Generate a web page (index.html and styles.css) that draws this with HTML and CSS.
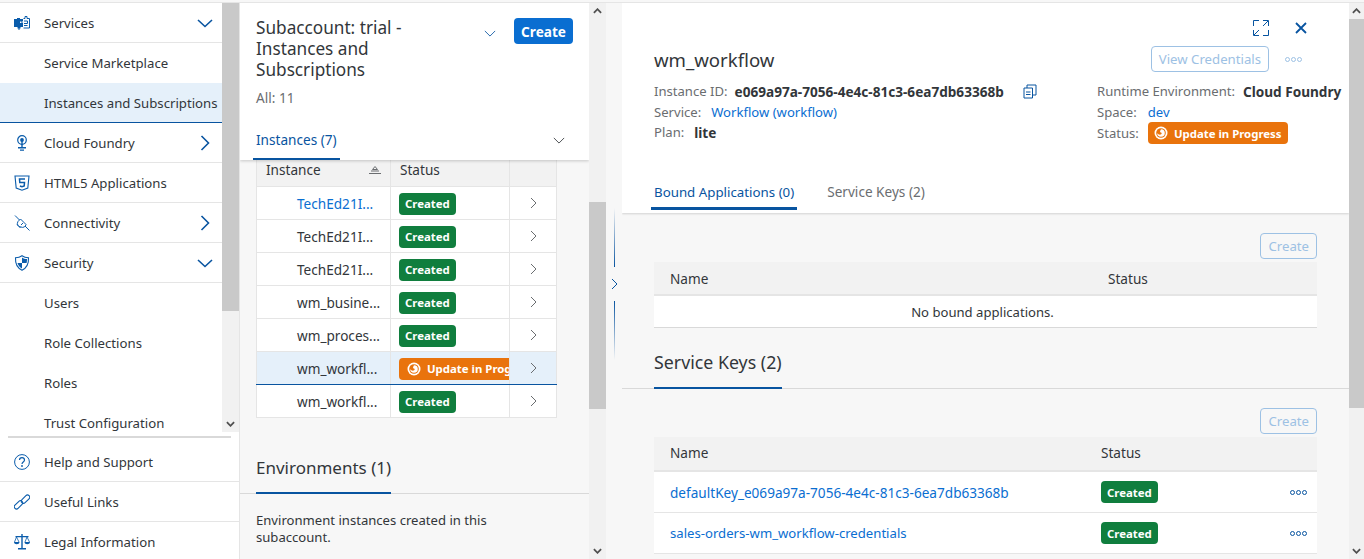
FILE: index.html
```html
<!DOCTYPE html>
<html lang="en">

<head>
	<meta charset="UTF-8">
	<meta name="viewport" content="width=device-width, initial-scale=1.0">
	<title>Instances and Subscriptions</title>
	<link rel="stylesheet" href="styles.css">
</head>

<body>
	<div class="app">
		<!-- Left navigation -->
		<aside class="nav">
			<div class="nav-top">
				<ul class="nav-list">
					<li class="nav-item">
						<svg class="nav-icon" viewBox="0 0 16 16"><path fill="#0a5cab" fill-rule="evenodd" d="M0 4h3V3h3v1h3v2.500h-1v1h1V12H6.500v1.500h-1V15h-1v-1.500h-1V12H0zM6 6.500v1.500h1.500V6.500z"/><path fill="none" stroke="#0a5cab" stroke-width="1" d="M9.500 3.500h1.500V1.500h2v2h2.500v9.500H9.500M10 6h3.500v2.500H10M13.500 6v0M10 10.500h3.500"/></svg>
						<span class="nav-text">Services</span>
						<svg class="nav-arrow" viewBox="0 0 16 16"><path d="M1 5l7 6.500L15 5"/></svg>
					</li>
					<li class="nav-item sub">Service Marketplace</li>
					<li class="nav-item sub selected">Instances and Subscriptions</li>
					<li class="nav-item">
						<svg class="nav-icon" viewBox="0 0 16 16"><circle cx="8" cy="5" r="4.300" fill="none" stroke="#0a5cab" stroke-width="1.200"/><circle cx="8" cy="5" r="1.900" fill="#0a5cab"/><path fill="#0a5cab" d="M7.300 6h1.400v7.500H7.300zM4 12h8v1.500H4zM6 14.500h4v1.300H6z"/></svg>
						<span class="nav-text">Cloud Foundry</span>
						<svg class="nav-arrow" viewBox="0 0 16 16"><path d="M4.500 1l7 7-7 7"/></svg>
					</li>
					<li class="nav-item">
						<svg class="nav-icon" viewBox="0 0 16 16"><path fill="none" stroke="#0a5cab" stroke-width="1.100" d="M1 1h14l-1.200 12L8 15.200 2.200 13z"/><path fill="none" stroke="#0a5cab" stroke-width="1.500" d="M11 4H5.500l.3 3.500h4.700L10.200 11 8 11.700 5.900 11"/></svg>
						<span class="nav-text">HTML5 Applications</span>
					</li>
					<li class="nav-item">
						<svg class="nav-icon" viewBox="0 0 16 16"><g fill="none" stroke="#0a5cab" stroke-width="1"><path d="M1 .500l4.500 4.500M11 11l4.500 4.500M4 6.500L6.500 4l5.500 5.500a3.500 3.500 0 0 1-5 2.500a3.500 3.500 0 0 1-3-5.500z"/><path d="M3 9.500L6.500 13M9 8l-2 2"/></g></svg>
						<span class="nav-text">Connectivity</span>
						<svg class="nav-arrow" viewBox="0 0 16 16"><path d="M4.500 1l7 7-7 7"/></svg>
					</li>
					<li class="nav-item">
						<svg class="nav-icon" viewBox="0 0 16 16"><path fill="none" stroke="#0a5cab" stroke-width="1.100" d="M8 .7c2 1.500 4 2 6.500 2 .3 5.500-1.500 10-6.500 12.500-5-2.500-6.800-7-6.500-12.500 2.500 0 4.500-.5 6.500-2z"/><path fill="#0a5cab" d="M8 2.500c1.500 1 3 1.500 5 1.600 0 1.300-.1 2.700-.4 3.900H8zM8 8v5.500C5.800 12.200 4.300 10.400 3.500 8z"/></svg>
						<span class="nav-text">Security</span>
						<svg class="nav-arrow" viewBox="0 0 16 16"><path d="M1 5l7 6.500L15 5"/></svg>
					</li>
					<li class="nav-item sub">Users</li>
					<li class="nav-item sub">Role Collections</li>
					<li class="nav-item sub">Roles</li>
					<li class="nav-item sub">Trust Configuration</li>
				</ul>
				<div class="scrollbar nav-scroll">
					<div class="thumb nav-thumb"></div>
					<div class="track-fill"></div>
					<svg class="scroll-arrow" viewBox="0 0 10 6"><path d="M1 1l4 4 4-4"/></svg>
				</div>
			</div>
			<ul class="nav-bottom">
				<li class="nav-item">
					<svg class="nav-icon" viewBox="0 0 16 16"><circle cx="8" cy="8" r="7.400" fill="none" stroke="#0a5cab" stroke-width="1"/><path fill="none" stroke="#0a5cab" stroke-width="1.200" d="M5.500 6c0-3.300 5-3.300 5 0 0 2-2.500 2-2.500 4"/><circle cx="8" cy="12" r=".9" fill="#0a5cab"/></svg>
					<span class="nav-text">Help and Support</span>
				</li>
				<li class="nav-item">
					<svg class="nav-icon" viewBox="0 0 16 16"><g fill="none" stroke="#0a5cab" stroke-width="1.100"><rect x="6.500" y="3" width="10" height="4.400" rx="2.200" transform="rotate(-45 11.500 5.200)"/><rect x="-.5" y="8.600" width="10" height="4.400" rx="2.200" transform="rotate(-45 4.500 10.800)"/></g></svg>
					<span class="nav-text">Useful Links</span>
				</li>
				<li class="nav-item">
					<svg class="nav-icon" viewBox="0 0 16 16"><path fill="#0a5cab" d="M7.300 0h1.400v14H7.300zM1.500 2h13v1.200h-13zM4 14h8v1.500H4z"/><path fill="#0a5cab" d="M0 8h5.500c0 3-5.500 3-5.500 0zM10.500 8H16c0 3-5.500 3-5.500 0z"/><path fill="none" stroke="#0a5cab" stroke-width=".8" d="M.5 8l2-5 2.500 5M11 8l2-5 2.500 5"/></svg>
					<span class="nav-text">Legal Information</span>
				</li>
			</ul>
		</aside>

		<!-- Instances list -->
		<section class="list-col">
			<div class="list-pane">
				<header class="list-head">
					<div class="list-title-row">
						<h1 class="list-title">Subaccount: trial - Instances and Subscriptions</h1>
						<svg class="title-chevron" viewBox="0 0 14 8"><path d="M1 1l6 6 6-6"/></svg>
						<button class="btn-primary">Create</button>
					</div>
					<div class="list-count">All: 11</div>
					<div class="list-tabs">
						<span class="list-tab">Instances (7)</span>
						<svg class="tab-chevron" viewBox="0 0 14 8"><path d="M1 1l6 6 6-6"/></svg>
					</div>
				</header>
				<table class="inst-table">
					<thead>
						<tr>
							<th class="c-name">
								<div class="th-sort">Instance
									<svg class="sort-icon" viewBox="0 0 12 8"><path d="M6 .500l2.500 3h-5zM2 5h8M0 7.500h12"/></svg>
								</div>
							</th>
							<th class="c-status">Status</th>
							<th class="c-go"></th>
						</tr>
					</thead>
					<tbody>
						<tr>
							<td class="c-name link">TechEd21I...</td>
							<td class="c-status"><span class="tag ok">Created</span></td>
							<td class="c-go"><svg class="row-go" viewBox="0 0 7 12"><path d="M1 1l5 5-5 5"/></svg></td>
						</tr>
						<tr>
							<td class="c-name">TechEd21I...</td>
							<td class="c-status"><span class="tag ok">Created</span></td>
							<td class="c-go"><svg class="row-go" viewBox="0 0 7 12"><path d="M1 1l5 5-5 5"/></svg></td>
						</tr>
						<tr>
							<td class="c-name">TechEd21I...</td>
							<td class="c-status"><span class="tag ok">Created</span></td>
							<td class="c-go"><svg class="row-go" viewBox="0 0 7 12"><path d="M1 1l5 5-5 5"/></svg></td>
						</tr>
						<tr>
							<td class="c-name">wm_busine...</td>
							<td class="c-status"><span class="tag ok">Created</span></td>
							<td class="c-go"><svg class="row-go" viewBox="0 0 7 12"><path d="M1 1l5 5-5 5"/></svg></td>
						</tr>
						<tr>
							<td class="c-name">wm_proces...</td>
							<td class="c-status"><span class="tag ok">Created</span></td>
							<td class="c-go"><svg class="row-go" viewBox="0 0 7 12"><path d="M1 1l5 5-5 5"/></svg></td>
						</tr>
						<tr class="row-selected">
							<td class="c-name">wm_workfl...</td>
							<td class="c-status">
								<div class="clip"><span class="tag busy">
									<svg class="tag-icon" viewBox="0 0 14 14"><circle cx="7" cy="7" r="6.500" fill="#fff"/><circle cx="7" cy="7" r="4.800" fill="#e9730c"/><path fill="#fff" d="M7 3.200a3.800 3.800 0 1 1-3.800 3.800c1 1.800 3 2 4 1.200S7.500 6 6 6.200c0-1 .3-2.200 1-3z"/></svg>
									Update in Progress</span></div>
							</td>
							<td class="c-go"><svg class="row-go" viewBox="0 0 7 12"><path d="M1 1l5 5-5 5"/></svg></td>
						</tr>
						<tr>
							<td class="c-name">wm_workfl...</td>
							<td class="c-status"><span class="tag ok">Created</span></td>
							<td class="c-go"><svg class="row-go" viewBox="0 0 7 12"><path d="M1 1l5 5-5 5"/></svg></td>
						</tr>
					</tbody>
				</table>
				<h2 class="env-title"><span>Environments (1)</span></h2>
				<p class="env-text">Environment instances created in this subaccount.</p>
			</div>
			<div class="scrollbar list-scroll">
				<svg class="scroll-arrow" viewBox="0 0 10 6"><path d="M1 5l4-4 4 4"/></svg>
				<div class="list-spacer"></div>
				<div class="thumb list-thumb"></div>
				<div class="track-fill"></div>
				<svg class="scroll-arrow" viewBox="0 0 10 6"><path d="M1 1l4 4 4-4"/></svg>
			</div>
		</section>

		<!-- Splitter -->
		<div class="splitter">
			<div class="split-line top"></div>
			<svg class="split-arrow" viewBox="0 0 7 12"><path d="M1 1l5 5-5 5"/></svg>
			<div class="split-line bottom"></div>
		</div>

		<!-- Detail panel -->
		<section class="detail">
			<div class="detail-pane">
				<header class="detail-head">
					<div class="detail-actions">
						<svg class="act-icon" viewBox="0 0 16 16"><path d="M6 .500H.5V6M10 15.500h5.500V10M.5 10v5.500H6M15.500 6V.500H10M15 1L10 6M1 15l5-5"/></svg>
						<svg class="act-icon close" viewBox="0 0 12 12"><path d="M1 1l10 10M11 1L1 11"/></svg>
					</div>
					<div class="detail-title-row">
						<h2 class="detail-title">wm_workflow</h2>
						<button class="btn-ghost">View Credentials</button>
						<span class="dots pale"><i></i><i></i><i></i></span>
					</div>
					<div class="facts">
						<div class="facts-col">
							<div class="fact"><span class="fact-label">Instance ID:</span><b>e069a97a-7056-4e4c-81c3-6ea7db63368b</b>
								<svg class="copy-icon" viewBox="0 0 14 15"><path d="M1 4h8.500v10H1zM4 4V1h9v10h-3.500M3 8h4.500M3 10.500h4.500"/></svg>
							</div>
							<div class="fact"><span class="fact-label">Service:</span><a class="link">Workflow (workflow)</a></div>
							<div class="fact"><span class="fact-label">Plan:</span><b class="plan-value">lite</b></div>
						</div>
						<div class="facts-col right">
							<div class="fact"><span class="fact-label">Runtime Environment:</span><b>Cloud Foundry</b></div>
							<div class="fact"><span class="fact-label">Space:</span><a class="link">dev</a></div>
							<div class="fact"><span class="fact-label">Status:</span><span class="tag busy status-tag">
								<svg class="tag-icon" viewBox="0 0 14 14"><circle cx="7" cy="7" r="6.500" fill="#fff"/><circle cx="7" cy="7" r="4.800" fill="#e9730c"/><path fill="#fff" d="M7 3.200a3.800 3.800 0 1 1-3.800 3.800c1 1.800 3 2 4 1.200S7.500 6 6 6.200c0-1 .3-2.200 1-3z"/></svg>
								Update in Progress</span></div>
						</div>
					</div>
					<nav class="detail-tabs">
						<span class="detail-tab active">Bound Applications (0)</span>
						<span class="detail-tab">Service Keys (2)</span>
					</nav>
				</header>

				<div class="block">
					<div class="block-bar"><button class="btn-ghost">Create</button></div>
					<div class="grid-row grid-head bound"><span>Name</span><span>Status</span></div>
					<div class="grid-empty">No bound applications.</div>
				</div>

				<h2 class="keys-title"><span>Service Keys (2)</span></h2>

				<div class="block">
					<div class="block-bar second"><button class="btn-ghost">Create</button></div>
					<div class="grid-row grid-head keys"><span>Name</span><span>Status</span></div>
					<div class="grid-row keys key-row">
						<a class="link key-id">defaultKey_e069a97a-7056-4e4c-81c3-6ea7db63368b</a>
						<span><span class="tag ok">Created</span></span>
						<span class="dots"><i></i><i></i><i></i></span>
					</div>
					<div class="grid-row keys key-row">
						<a class="link">sales-orders-wm_workflow-credentials</a>
						<span><span class="tag ok">Created</span></span>
						<span class="dots"><i></i><i></i><i></i></span>
					</div>
				</div>
			</div>
			<div class="scrollbar detail-scroll">
				<svg class="scroll-arrow" viewBox="0 0 10 6"><path d="M1 5l4-4 4 4"/></svg>
				<div class="thumb detail-thumb"></div>
				<div class="track-fill"></div>
				<svg class="scroll-arrow" viewBox="0 0 10 6"><path d="M1 1l4 4 4-4"/></svg>
			</div>
		</section>
	</div>
</body>

</html>
```

FILE: styles.css
```css
* {
	box-sizing: border-box;
}

html,
body {
	margin: 0;
	height: 100%;
	overflow: hidden;
}

body {
	font-family: "Noto Sans", Arial, sans-serif;
	font-size: 13.6px;
	color: #32363a;
	background-color: #f7f7f7;
}

.app {
	display: flex;
	height: 557px;
	margin-top: 2px;
	border-top: 1px solid #e5e5e5;
}

ul {
	list-style-type: none;
	margin: 0;
	padding: 0;
}

h1,
h2,
p {
	margin: 0;
	font-weight: normal;
}

a.link,
.link {
	color: #0a6ed1;
}

/* Navigation */
.nav {
	width: 240px;
	flex: none;
	background: white;
	display: flex;
	flex-direction: column;
	border-right: 1px solid #e5e5e5;
	height: 556px;
	overflow: hidden;
}

.nav-top {
	display: flex;
	flex: none;
	height: 429px;
	overflow: hidden;
}

.nav-list {
	width: 222px;
	flex: none;
}

.nav-item {
	display: flex;
	align-items: center;
	height: 40px;
	padding: 1px 0 0 14px;
	border-bottom: 1px solid #e5e5e5;
	font-size: 13.2px;
	white-space: nowrap;
}

.nav-item.sub {
	padding: 0 0 1px 44px;
	border-bottom: none;
}

.nav-item.selected {
	padding: 1px 0 0 44px;
	background-color: #e5f0fa;
	border-bottom: 1px solid #0854a0;
}

.nav-icon {
	width: 16px;
	height: 16px;
	flex: none;
	margin-right: 14px;
}

.nav-text {
	flex: 1;
}

.nav-arrow {
	width: 16px;
	height: 16px;
	flex: none;
	margin-right: 9px;
	fill: none;
	stroke: #0854a0;
	stroke-width: 1.600;
}

.scrollbar {
	flex: none;
	display: flex;
	flex-direction: column;
	background-color: #f1f1f1;
}

.thumb {
	background-color: #c9c9c9;
}

.track-fill {
	flex: 1;
}

.scroll-arrow {
	flex: none;
	width: 9px;
	height: 6px;
	margin: 5px auto;
	fill: none;
	stroke: #505050;
	stroke-width: 2;
}

.nav-scroll {
	width: 17px;
}

.nav-thumb {
	height: 308px;
}

.nav-bottom {
	flex: none;
	border-top: 2px solid #d9d9d9;
	margin: 4px 8px 0;
	padding-top: 4px;
}

.nav-bottom .nav-item {
	margin: 0 -8px;
	padding-left: 14px;
	height: 40px;
}

/* Instances list */
.list-col {
	width: 366px;
	flex: none;
	display: flex;
	height: 556px;
}

.list-pane {
	width: 349px;
	flex: none;
	overflow: hidden;
}

.list-head {
	background: white;
	height: 157px;
	padding: 15px 16px 0;
	box-shadow: 0 1px 3px rgba(0, 0, 0, 0.2);
	position: relative;
}

.list-title-row {
	display: flex;
	align-items: flex-start;
}

.list-title {
	width: 210px;
	font-size: 17.2px;
	line-height: 21px;
	margin-top: -1px;
}

.title-chevron {
	width: 12px;
	height: 7px;
	margin: 12px 18px 0 18px;
	fill: none;
	stroke: #0854a0;
	stroke-width: 1;
}

.btn-primary {
	font-family: inherit;
	font-size: 13.6px;
	font-weight: bold;
	color: white;
	background-color: #0a6ed1;
	border: none;
	border-radius: 4px;
	width: 59px;
	height: 26px;
	padding: 0;
}

.list-count {
	color: #6a6d70;
	margin-top: 9px;
	line-height: 18px;
}

.list-tabs {
	display: flex;
	align-items: flex-start;
	justify-content: space-between;
	margin: 12px -16px 0;
	padding: 0 24px 0 13px;
	height: 41px;
}

.list-tab {
	color: #0854a0;
	height: 41px;
	line-height: 32px;
	border-bottom: 2px solid #0854a0;
	padding: 5px 3px 0;
}

.tab-chevron {
	width: 12px;
	height: 7px;
	margin-top: 18px;
	fill: none;
	stroke: #32363a;
	stroke-width: 1;
}

.inst-table {
	border-collapse: collapse;
	margin-left: 16px;
	width: 300px;
	table-layout: fixed;
	background: white;
}

.inst-table th,
.inst-table td {
	border: 1px solid #e5e5e5;
	height: 33px;
	padding: 0;
	white-space: nowrap;
}

.inst-table td {
	padding-top: 2px;
}

.inst-table th {
	height: 26px;
	padding-bottom: 6px;
	background-color: #f2f2f2;
	font-weight: normal;
	text-align: left;
	border-top: none;
}

.inst-table th.c-name,
.inst-table th.c-status {
	padding-left: 9px;
}

.th-sort {
	display: flex;
	justify-content: space-between;
	align-items: center;
	padding-right: 9px;
}

.sort-icon {
	width: 12px;
	height: 8px;
	fill: none;
	stroke: #6a6d70;
	stroke-width: 1;
}

.c-name {
	width: 134px;
}

.c-status {
	width: 119px;
}

.c-go {
	width: 47px;
	text-align: center;
}

td.c-name {
	padding-left: 40px !important;
}

td.c-status {
	padding-left: 8px !important;
}

.row-go {
	display: block;
	width: 7px;
	height: 12px;
	margin: -2px 0 0 20px;
	fill: none;
	stroke: #6a6d70;
	stroke-width: 1;
}

.row-selected td {
	background-color: #e5f0fa;
	border-bottom: 1px solid #0854a0;
}

.clip {
	overflow: hidden;
}

.tag {
	display: inline-flex;
	align-items: center;
	height: 22px;
	padding: 0 6px;
	border-radius: 4px;
	font-size: 11.400px;
	font-weight: bold;
	color: white;
	white-space: nowrap;
	vertical-align: middle;
}

.tag.ok {
	background-color: #107e3e;
}

.tag.busy {
	background-color: #e9730c;
}

.clip .tag {
	padding-left: 8px;
}

.tag-icon {
	width: 14px;
	height: 14px;
	margin-right: 6px;
}

.env-title {
	font-size: 17px;
	line-height: 24px;
	margin-top: 38px;
	border-bottom: 1px solid #d9d9d9;
	padding-left: 16px;
	height: 38px;
}

.env-title span {
	display: inline-block;
	height: 38px;
	border-bottom: 2px solid #0854a0;
}

.env-text {
	padding: 18px 16px 0;
	font-size: 13.1px;
	line-height: 17px;
	width: 260px;
	box-sizing: content-box;
}

.list-scroll {
	width: 17px;
}

.list-spacer {
	height: 183px;
}

.list-thumb {
	height: 207px;
}

/* Splitter */
.splitter {
	width: 16px;
	flex: none;
	display: flex;
	flex-direction: column;
	align-items: flex-start;
	padding: 205px 0 0 8px;
}

.split-line {
	width: 1px;
	height: 59px;
}

.split-line.top {
	background: linear-gradient(to bottom, #f7f7f7, #0854a0);
}

.split-line.bottom {
	background: linear-gradient(to bottom, #0854a0, #f7f7f7);
}

.split-arrow {
	width: 7px;
	height: 12px;
	margin: 11px 0 11px -3px;
	flex: none;
	fill: none;
	stroke: #0854a0;
	stroke-width: 1;
}

/* Detail */
.detail {
	flex: 1;
	min-width: 0;
	display: flex;
	height: 556px;
}

.detail-pane {
	flex: 1;
	min-width: 0;
	overflow: hidden;
}

.detail-head {
	background: white;
	height: 210px;
	box-shadow: 0 1px 2px rgba(0, 0, 0, 0.15);
	padding: 16px 0 0 32px;
}

.detail-actions {
	display: flex;
	justify-content: flex-end;
	gap: 26px;
	padding-right: 42px;
	height: 18px;
	align-items: center;
}

.act-icon {
	width: 16px;
	height: 16px;
	fill: none;
	stroke: #0854a0;
	stroke-width: 1;
}

.act-icon.close {
	width: 12px;
	height: 12px;
	stroke-width: 1.800;
}

.detail-title-row {
	display: flex;
	align-items: center;
	margin-top: 7px;
	height: 30px;
}

.detail-title {
	font-size: 18.600px;
	flex: 1;
}

.btn-ghost {
	font-family: inherit;
	font-size: 13.2px;
	color: #9dc1e4;
	background: transparent;
	border: 1px solid #9dc1e4;
	border-radius: 4px;
	height: 26px;
	padding: 0 7px;
}

.dots {
	display: inline-flex;
	gap: 1px;
}

.dots i {
	width: 5px;
	height: 5px;
	border: 1px solid #0854a0;
	border-radius: 50%;
}

.dots.pale {
	margin: 0 47px 0 16px;
}

.dots.pale i {
	border-color: #9dc1e4;
}

.facts {
	display: flex;
	margin-top: 7px;
}

.facts-col {
	width: 443px;
}

.facts-col.right {
	flex: 1;
	white-space: nowrap;
}

.fact {
	display: flex;
	align-items: center;
	min-height: 20.500px;
	gap: 7px;
}

.facts-col.right .fact {
	gap: 8px;
}

.fact-label {
	font-size: 13.1px;
	color: #6a6d70;
}

.fact .link {
	font-size: 13.1px;
	margin-left: 3px;
}

.fact b {
	font-weight: bold;
}

.fact .plan-value {
	margin-left: 3px;
}

.status-tag {
	margin-left: 1px;
}

.copy-icon {
	width: 14px;
	height: 15px;
	margin-left: 12px;
	fill: none;
	stroke: #0854a0;
	stroke-width: 1;
}

.detail-tabs {
	display: flex;
	gap: 30px;
	margin-top: 37px;
}

.detail-tab {
	height: 29px;
	font-size: 13.6px;
	color: #6a6d70;
	line-height: 22px;
}

.detail-tab.active {
	font-size: 13.3px;
	color: #0854a0;
	border-bottom: 3px solid #0854a0;
	margin-left: -3px;
	padding: 0 3px;
}

.block {
	margin: 0 32px;
}

.block-bar {
	display: flex;
	justify-content: flex-end;
	padding-top: 20px;
	height: 49px;
}

.block-bar.second {
	height: 48px;
	padding-top: 19px;
}

.grid-row {
	display: grid;
	align-items: center;
	padding-left: 16px;
}

.grid-row.bound {
	grid-template-columns: 438px 1fr;
}

.grid-row.keys {
	grid-template-columns: 431px 1fr 27px;
}

.grid-head {
	height: 34px;
	background-color: #f2f2f2;
	border-bottom: 2px solid #e5e5e5;
}

.grid-empty {
	height: 32px;
	line-height: 32px;
	font-size: 13.1px;
	padding-right: 6px;
	background: white;
	text-align: center;
	border-bottom: 1px solid #d9d9d9;
}

.keys-title {
	font-size: 17.800px;
	line-height: 24px;
	margin-top: 22px;
	height: 39px;
	padding-left: 32px;
	border-bottom: 1px solid #d9d9d9;
}

.keys-title span {
	display: inline-block;
	height: 39px;
	border-bottom: 2px solid #0854a0;
}

.grid-row.key-row {
	height: 41px;
	background: white;
	border-bottom: 1px solid #e5e5e5;
	font-size: 13.15px;
}

.key-id {
	font-size: 13.6px;
}

.grid-head.keys {
	height: 35px;
	padding-bottom: 2px;
}

.detail-scroll {
	width: 15px;
}

.detail-thumb {
	height: 389px;
}
```
